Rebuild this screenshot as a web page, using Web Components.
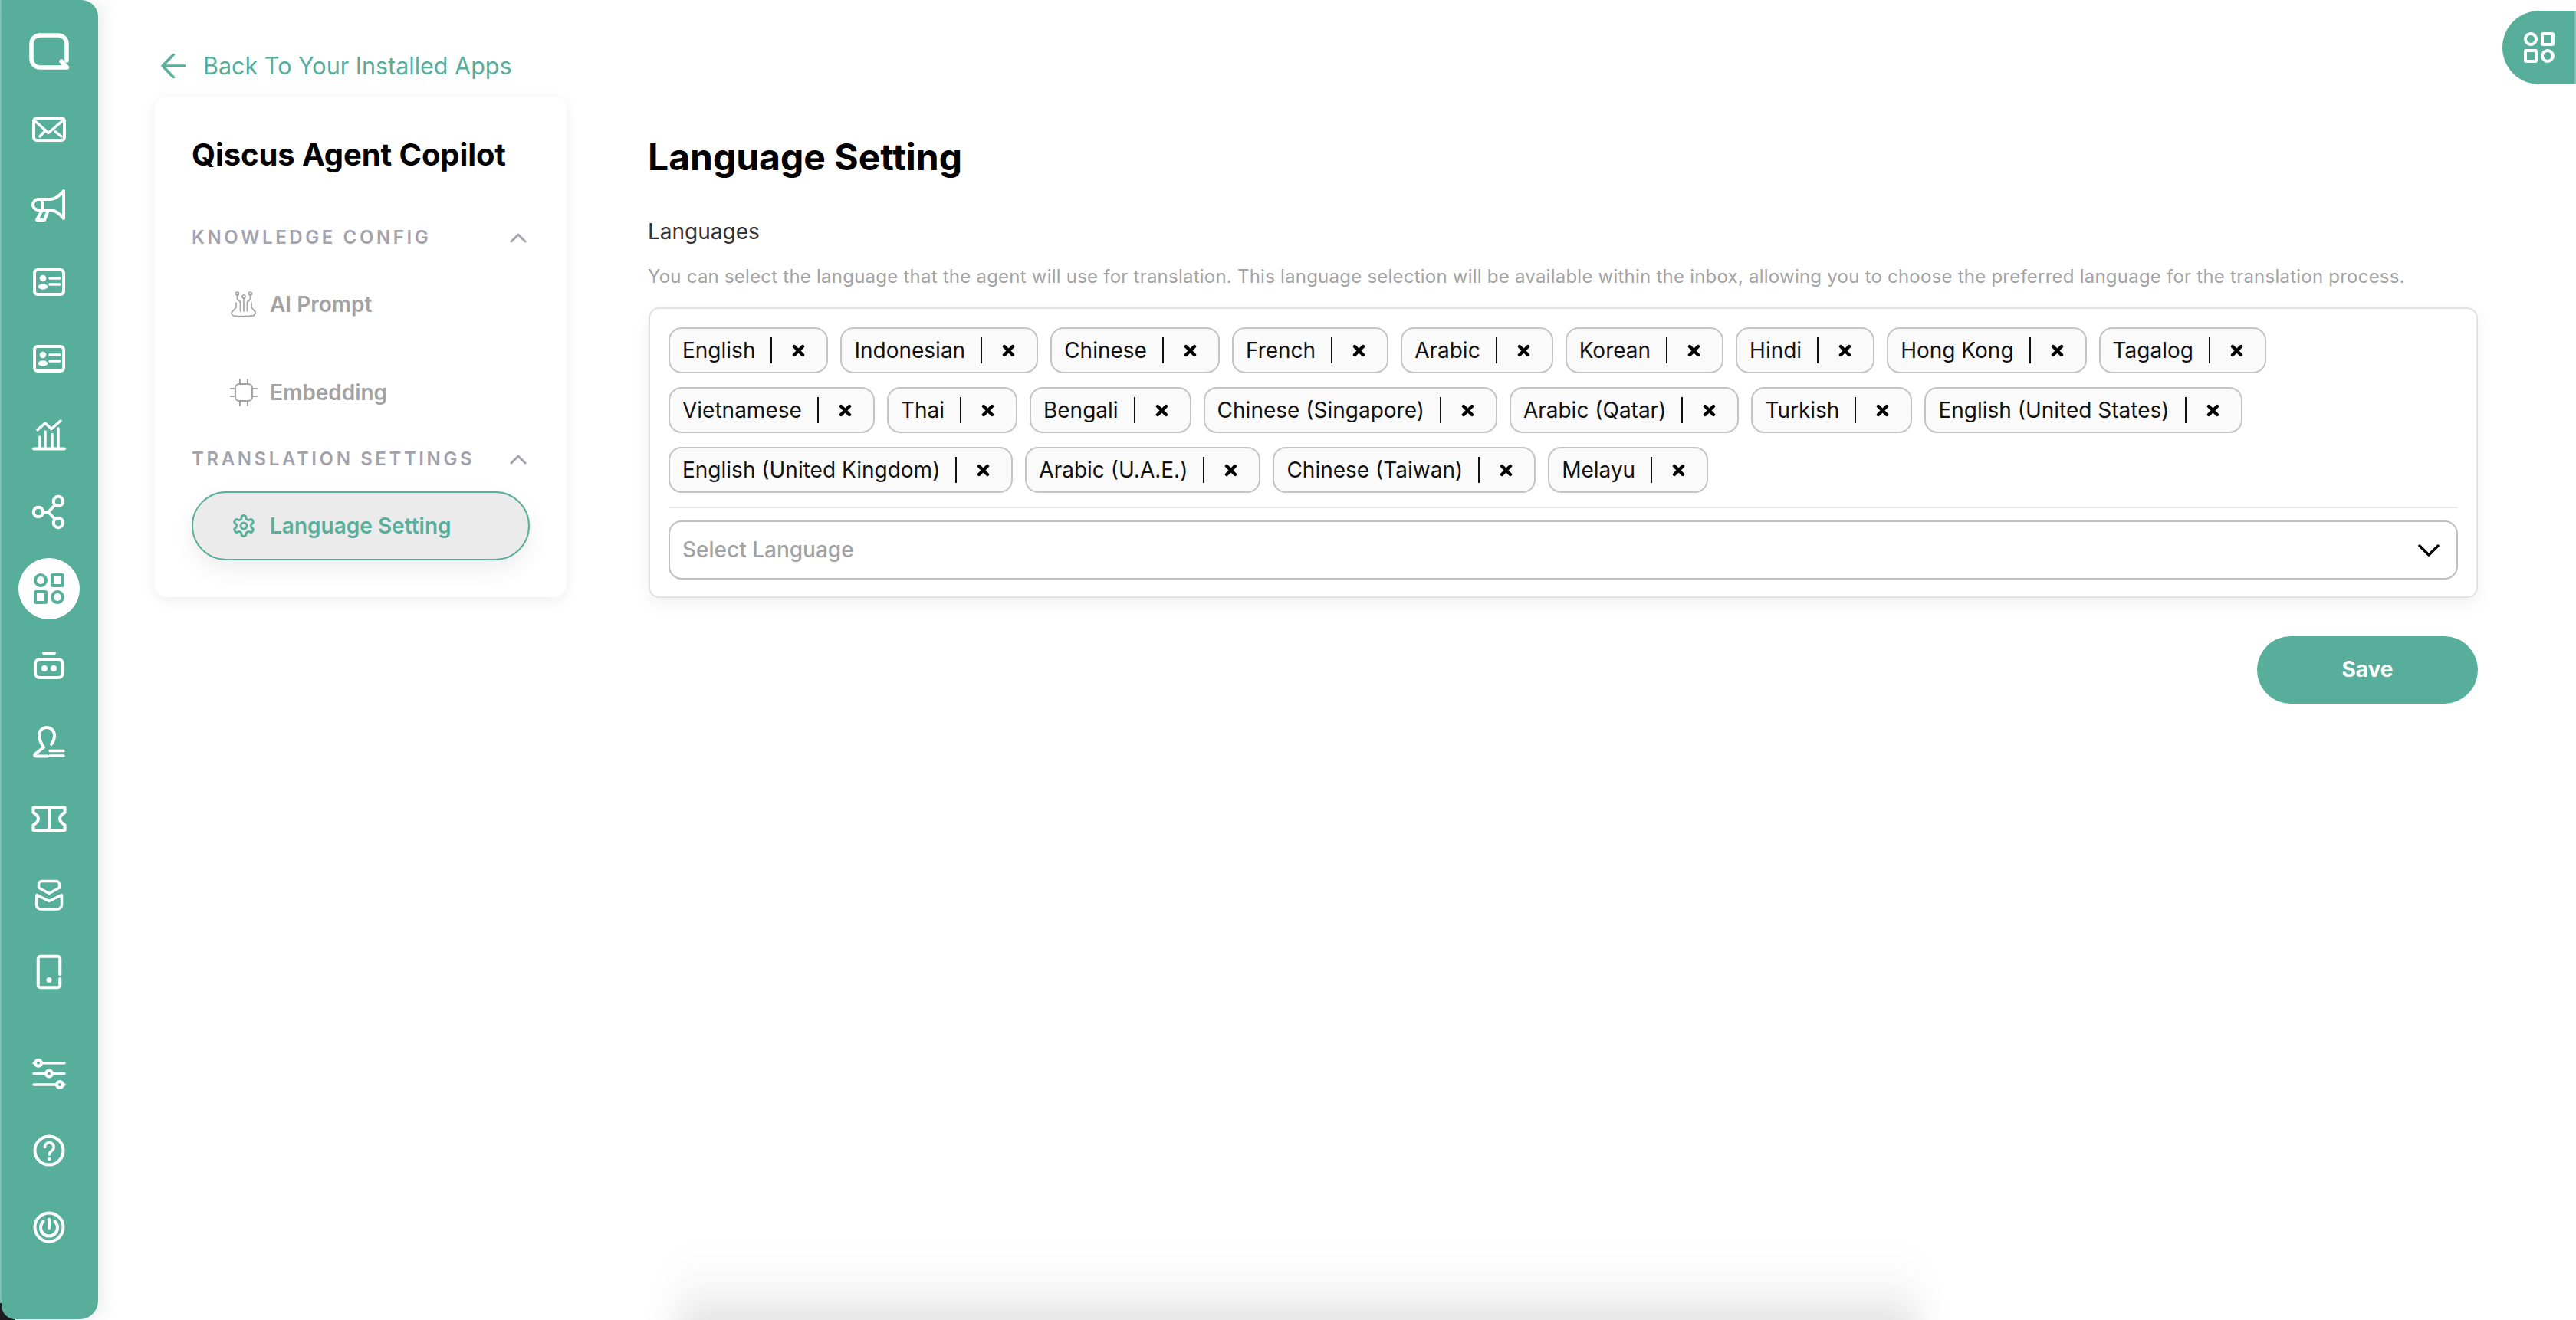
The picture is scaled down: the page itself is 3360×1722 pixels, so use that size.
<!DOCTYPE html>
<html lang="en">
<head>
<meta charset="utf-8">
<title>Language Setting</title>
<style>
  html, body { margin: 0; height: 100%; background: #fff; overflow: hidden; }
  body { font-family: Inter, "Liberation Sans", sans-serif; }
</style>
</head>
<body>
<qc-page>
  <qc-rail slot="rail">
    <qc-rail-icon name="logo"></qc-rail-icon>
    <qc-rail-icon name="mail"></qc-rail-icon>
    <qc-rail-icon name="megaphone"></qc-rail-icon>
    <qc-rail-icon name="card"></qc-rail-icon>
    <qc-rail-icon name="card"></qc-rail-icon>
    <qc-rail-icon name="chart"></qc-rail-icon>
    <qc-rail-icon name="share"></qc-rail-icon>
    <qc-rail-icon name="apps" active></qc-rail-icon>
    <qc-rail-icon name="bot"></qc-rail-icon>
    <qc-rail-icon name="stamp"></qc-rail-icon>
    <qc-rail-icon name="ticket"></qc-rail-icon>
    <qc-rail-icon name="mailopen"></qc-rail-icon>
    <qc-rail-icon name="tablet"></qc-rail-icon>
    <qc-rail-icon name="sliders" slot="bottom"></qc-rail-icon>
    <qc-rail-icon name="help" slot="bottom"></qc-rail-icon>
    <qc-rail-icon name="power" slot="bottom"></qc-rail-icon>
  </qc-rail>

  <qc-back-link slot="back">Back To Your Installed Apps</qc-back-link>

  <qc-side-card slot="side" heading="Qiscus Agent Copilot">
    <qc-nav-section>KNOWLEDGE CONFIG</qc-nav-section>
    <qc-nav-item icon="prompt">AI Prompt</qc-nav-item>
    <qc-nav-item icon="chip">Embedding</qc-nav-item>
    <qc-nav-section>TRANSLATION SETTINGS</qc-nav-section>
    <qc-nav-item icon="gear" active>Language Setting</qc-nav-item>
  </qc-side-card>

  <qc-language-form slot="content">
    <lang-chip>English</lang-chip>
    <lang-chip>Indonesian</lang-chip>
    <lang-chip>Chinese</lang-chip>
    <lang-chip>French</lang-chip>
    <lang-chip>Arabic</lang-chip>
    <lang-chip>Korean</lang-chip>
    <lang-chip>Hindi</lang-chip>
    <lang-chip>Hong Kong</lang-chip>
    <lang-chip>Tagalog</lang-chip>
    <lang-chip>Vietnamese</lang-chip>
    <lang-chip>Thai</lang-chip>
    <lang-chip>Bengali</lang-chip>
    <lang-chip>Chinese (Singapore)</lang-chip>
    <lang-chip>Arabic (Qatar)</lang-chip>
    <lang-chip>Turkish</lang-chip>
    <lang-chip>English (United States)</lang-chip>
    <lang-chip>English (United Kingdom)</lang-chip>
    <lang-chip>Arabic (U.A.E.)</lang-chip>
    <lang-chip>Chinese (Taiwan)</lang-chip>
    <lang-chip>Melayu</lang-chip>
  </qc-language-form>

  <qc-corner-tab slot="overlay"></qc-corner-tab>
</qc-page>

<script>
const TEAL = "#57ae9a";

// 60x60 rail icons, drawn around the centre of each rail slot
const RAIL_ICONS = {
  logo: `<g style="filter:blur(.6px)" stroke-width="5.5"><path d="M18 8H42a11 11 0 0 1 11 11V41"/><path d="M18 8a11 11 0 0 0-11 11V39a11 11 0 0 0 11 11H53.5L46 42"/></g>`,
  mail: `<rect x="10" y="16" width="40" height="29" rx="4"/><path d="M12 20L29 35.5 47 20M18 40L24 33.5M46 40L38 33.5" stroke-width="3.5"/>`,
  megaphone: `<path d="M49 11V47C44 41 38 36 31 36H16a7 7 0 0 1 0-14H31C38 22 44 17 49 11Z"/><path d="M21 22V36M21 36L14 49H24L29 36"/>`,
  card: `<rect x="11" y="14" width="38" height="32" rx="4"/><circle cx="22" cy="25" r="4.3" fill="#fff" stroke="none"/><ellipse cx="22" cy="36" rx="6.3" ry="3.7" fill="#fff" stroke="none"/><path d="M31 25H44M31 33H44" stroke-width="3.5"/>`,
  chart: `<path d="M10 47.5H50"/><path d="M18 47V32M25 47V25M34 47V28.5M42 47V21M15 22.6L25 14L33 21.5L45 11" stroke-width="3.5"/>`,
  share: `<circle cx="42" cy="16" r="6.3"/><circle cx="16" cy="30" r="6.3"/><circle cx="42" cy="44" r="6.3"/><path d="M22.5 30H29L37 21.5M29 30L37 38.5"/>`,
  apps: `<circle cx="19" cy="19" r="7"/><rect x="34" y="12" width="14" height="14" rx="1"/><rect x="12" y="34" width="14" height="14" rx="1"/><circle cx="41" cy="41" r="7"/>`,
  bot: `<path d="M23 14H37"/><rect x="12" y="22" width="36" height="24" rx="6"/><circle cx="24" cy="34" r="4" fill="#fff" stroke="none"/><circle cx="36" cy="34" r="4" fill="#fff" stroke="none"/>`,
  stamp: `<path d="M33 33C35.5 30 37 26.5 37 21A10 10 0 0 0 17 21C17 27 19 31 23 37L12 45.5Q10 48.5 13 48.5H28"/><path d="M31 41.5H49M31 48H49" stroke-width="3.5"/>`,
  ticket: `<path d="M9.5 15.5H50.5V22C47 24 44 27 44 30C44 33 47 36 50.5 38V45H9.5V38C13 36 16 33 16 30C16 27 13 24 9.5 22ZM30 15.5V45"/>`,
  mailopen: `<path d="M20.5 11.5H39.5a4 4 0 0 1 4 4V20L30 27.5 16.5 20V15.5a4 4 0 0 1 4-4Z" stroke-width="3.5"/><path d="M14 29.5L30 37.5 46.5 29.5V42a6 6 0 0 1-6 6H19.5a6 6 0 0 1-6-6Z" stroke-width="3.5"/>`,
  tablet: `<path d="M44.25 33V12.75a3 3 0 0 0-3-3H18.75a3 3 0 0 0-3 3V47.25a3 3 0 0 0 3 3H41.25a3 3 0 0 0 3-3V39"/><circle cx="30" cy="40.5" r="3.5" fill="#fff" stroke="none"/>`,
  sliders: `<path d="M10 15.7H50M10 29.6H50M10 44H50" stroke-width="3.5"/><circle cx="16" cy="15.7" r="4" fill="${TEAL}"/><circle cx="30" cy="29.6" r="4" fill="${TEAL}"/><circle cx="44" cy="44" r="4" fill="${TEAL}"/>`,
  help: `<circle cx="30" cy="30" r="18.5"/><path d="M24.5 25.5a5.8 5.8 0 1 1 9 4.8c-2 1.4-3.2 2.6-3.2 5" stroke-width="3.5"/><circle cx="30.3" cy="41" r="2.2" fill="#fff" stroke="none"/>`,
  power: `<circle cx="30" cy="30" r="18.5"/><path d="M22.5 22.5a11 11 0 1 0 15 0M30 19.5V31"/>`
};

const NAV_ICONS = {
  prompt: `<g fill="none" stroke="currentColor" stroke-width="1.7" stroke-linecap="round" stroke-linejoin="round"><circle cx="9.5" cy="4" r="2"/><circle cx="18" cy="8" r="2"/><circle cx="26.5" cy="4" r="2"/><path d="M18 10V27M13.5 27V15L9.5 11.5V6M22.5 27V15L26.5 11.5V6M8 16V22L4.5 26M28 16V22L31.5 26"/><path d="M4.5 26C1.5 27.5 1.5 31.5 4 32.5C6 34.5 8 32.5 10 33.5C12 34.8 14 32.8 16 33.5C18 34.8 20 32.8 22 33.5C24 34.8 26 32.5 28 33C31.5 34 35 29 31.5 26"/></g>`,
  chip: `<g fill="none" stroke="currentColor" stroke-width="2" stroke-linecap="round"><rect x="7" y="7" width="22" height="22" rx="5"/><path d="M13 1V7M23 1V7M13 29V35M23 29V35M1 13H7M1 23H7M29 13H35M29 23H35"/></g>`,
  gear: `<g transform="translate(1.8 1.8) scale(1.35)" fill="none" stroke="currentColor" stroke-width="2.1" stroke-linejoin="round"><path d="M12.22 2h-.44a2 2 0 0 0-2 2v.18a2 2 0 0 1-1 1.73l-.43.25a2 2 0 0 1-2 0l-.15-.08a2 2 0 0 0-2.73.73l-.22.38a2 2 0 0 0 .73 2.73l.15.1a2 2 0 0 1 1 1.72v.51a2 2 0 0 1-1 1.74l-.15.09a2 2 0 0 0-.73 2.73l.22.38a2 2 0 0 0 2.73.73l.15-.08a2 2 0 0 1 2 0l.43.25a2 2 0 0 1 1 1.73V20a2 2 0 0 0 2 2h.44a2 2 0 0 0 2-2v-.18a2 2 0 0 1 1-1.73l.43-.25a2 2 0 0 1 2 0l.15.08a2 2 0 0 0 2.73-.73l.22-.39a2 2 0 0 0-.73-2.73l-.15-.08a2 2 0 0 1-1-1.74v-.5a2 2 0 0 1 1-1.74l.15-.09a2 2 0 0 0 .73-2.73l-.22-.38a2 2 0 0 0-2.73-.73l-.15.08a2 2 0 0 1-2 0l-.43-.25a2 2 0 0 1-1-1.73V4a2 2 0 0 0-2-2z"/><circle cx="12" cy="12" r="3"/></g>`
};

class QcPage extends HTMLElement {
  constructor() {
    super();
    this.attachShadow({ mode: "open" });
    this.shadowRoot.innerHTML = `
      <style>
        :host { display: grid; grid-template-columns: 128px 1fr; width: 3360px; height: 1722px; position: relative; overflow: hidden; color: #000; }
        main { padding: 66px 0 0 74px; min-width: 0; }
        .row { display: flex; align-items: flex-start; gap: 107px; margin-top: 20px; }
        .glow {
          position: absolute; left: 884px; top: 1625px; width: 1618px; height: 170px;
          background: linear-gradient(to bottom, rgba(0,0,0,0) 0, rgba(0,0,0,.01) 20%, rgba(0,0,0,.035) 38%, rgba(0,0,0,.1) 57%, rgba(0,0,0,.15) 100%);
          filter: blur(22px);
        }
      </style>
      <slot name="rail"></slot>
      <main>
        <slot name="back"></slot>
        <div class="row">
          <slot name="side"></slot>
          <slot name="content"></slot>
        </div>
      </main>
      <div class="glow"></div>
      <slot name="overlay"></slot>
    `;
  }
}

class QcRail extends HTMLElement {
  constructor() {
    super();
    this.attachShadow({ mode: "open" });
    this.shadowRoot.innerHTML = `
      <style>
        :host {
          display: block; height: 1722px; position: relative; z-index: 2;
          background:
            linear-gradient(#83c2b3, #83c2b3) 0 0 / 2px 1700px no-repeat,
            linear-gradient(#1c1c1c, #1c1c1c) 0 100% / 20px 22px no-repeat;
        }
        .rail {
          box-sizing: border-box; height: 1721px; margin-left: 2px; padding-top: 18px;
          background: ${TEAL};
          border-radius: 0 22px 24px 18px;
          box-shadow: 6px 0 22px rgba(40, 60, 60, .1);
        }
        .bottom { margin-top: 33px; }
      </style>
      <div class="rail">
        <slot></slot>
        <div class="bottom"><slot name="bottom"></slot></div>
      </div>
    `;
  }
}

class QcRailIcon extends HTMLElement {
  connectedCallback() {
    const active = this.hasAttribute("active");
    const root = this.shadowRoot || this.attachShadow({ mode: "open" });
    root.innerHTML = `
      <style>
        :host { display: flex; height: 100px; align-items: center; justify-content: center; margin-left: -2px; }
        .dot { width: 80px; height: 80px; border-radius: 50%; display: flex; align-items: center; justify-content: center; background: ${active ? "#fff" : "transparent"}; }
        svg { width: 60px; height: 60px; fill: none; stroke: ${active ? TEAL : "#fff"}; stroke-width: 4; stroke-linecap: round; stroke-linejoin: round; }
      </style>
      <div class="dot"><svg viewBox="0 0 60 60">${RAIL_ICONS[this.getAttribute("name")]}</svg></div>
    `;
  }
}

class QcBackLink extends HTMLElement {
  constructor() {
    super();
    this.attachShadow({ mode: "open" });
    this.shadowRoot.innerHTML = `
      <style>
        :host { display: flex; align-items: center; gap: 23px; height: 40px; margin-left: 8px; color: ${TEAL}; font: 400 30.5px/40px Inter, sans-serif; white-space: nowrap; }
        svg { width: 32px; height: 32px; fill: none; stroke: ${TEAL}; stroke-width: 3.5; stroke-linecap: round; stroke-linejoin: round; }
      </style>
      <svg viewBox="0 0 32 32"><path d="M2 16H31M16.5 1L2 16L16.5 31"/></svg>
      <span><slot></slot></span>
    `;
  }
}

class QcSideCard extends HTMLElement {
  connectedCallback() {
    const root = this.shadowRoot || this.attachShadow({ mode: "open" });
    root.innerHTML = `
      <style>
        :host { display: block; box-sizing: border-box; width: 537px; height: 653px; padding: 52px 48px 48px; border-radius: 16px; background: #fff; box-shadow: 0 4px 18px rgba(0,0,0,.07); }
        h2 { margin: 0 0 69px; font: 700 40px/48px Inter, sans-serif; letter-spacing: -.1px; color: #000; white-space: nowrap; }
      </style>
      <h2>${this.getAttribute("heading")}</h2>
      <slot></slot>
    `;
  }
}

class QcNavSection extends HTMLElement {
  constructor() {
    super();
    this.attachShadow({ mode: "open" });
    this.shadowRoot.innerHTML = `
      <style>
        :host { display: flex; align-items: center; justify-content: space-between; height: 30px; margin-bottom: 27px; padding-right: 4px; color: #a3a3ad; font: 600 24px/30px Inter, sans-serif; letter-spacing: 3.6px; white-space: nowrap; }
        :host(:not(:first-child)) { margin-top: 27px; margin-bottom: 27px; }
        svg { width: 22px; height: 14px; fill: none; stroke: #a3a3ad; stroke-width: 3; stroke-linecap: round; stroke-linejoin: round; }
      </style>
      <span><slot></slot></span>
      <svg viewBox="0 0 22 14"><path d="M2 12L11 3L20 12"/></svg>
    `;
  }
}

class QcNavItem extends HTMLElement {
  connectedCallback() {
    const root = this.shadowRoot || this.attachShadow({ mode: "open" });
    root.innerHTML = `
      <style>
        :host { display: flex; align-items: center; gap: 16px; box-sizing: border-box; height: 90px; padding-left: 50px; color: #a3a3a3; font: 600 28px/34px Inter, sans-serif; white-space: nowrap; }
        :host(:not(:last-child)) { margin-bottom: 25px; }
        :host(:has(+ qc-nav-section)) { margin-bottom: 0; }
        :host([active]) { padding-left: 48px; color: ${TEAL}; background: #ebebeb; border: 2px solid ${TEAL}; border-radius: 45px; box-shadow: 0 12px 30px rgba(0,0,0,.07); }
        svg { width: 36px; height: 36px; flex: none; }
      </style>
      <svg viewBox="0 0 36 36">${NAV_ICONS[this.getAttribute("icon")]}</svg>
      <span><slot></slot></span>
    `;
  }
}

class QcLanguageForm extends HTMLElement {
  constructor() {
    super();
    this.attachShadow({ mode: "open" });
    this.shadowRoot.innerHTML = `
      <style>
        :host { display: block; width: 2386px; padding-top: 50px; }
        h1 { margin: 0 0 51px -1px; font: 700 48px/58px Inter, sans-serif; color: #000; }
        .label { margin-left: -1px; font: 400 28px/34px Inter, sans-serif; color: #333; }
        .hint { margin: 27px 0 25px -1px; font: 400 24px/30px Inter, sans-serif; letter-spacing: .23px; color: #a3a3a3; white-space: nowrap; }
        .box { box-sizing: border-box; height: 379px; padding: 24px; border: 2px solid #e2e2e2; border-radius: 14px; background: #fff; box-shadow: 0 8px 22px rgba(0,0,0,.06); }
        .chips { display: flex; flex-wrap: wrap; gap: 18px 16px; padding-bottom: 18px; border-bottom: 2px solid #e8e8ec; }
        lang-picker { margin-top: 16px; }
        .actions { display: flex; justify-content: flex-end; margin-top: 50px; }
      </style>
      <h1>Language Setting</h1>
      <div class="label">Languages</div>
      <div class="hint">You can select the language that the agent will use for translation. This language selection will be available within the inbox, allowing you to choose the preferred language for the translation process.</div>
      <div class="box">
        <div class="chips"><slot></slot></div>
        <lang-picker></lang-picker>
      </div>
      <div class="actions"><qc-button>Save</qc-button></div>
    `;
  }
}

class LangChip extends HTMLElement {
  constructor() {
    super();
    this.attachShadow({ mode: "open" });
    this.shadowRoot.innerHTML = `
      <style>
        :host { display: flex; align-items: center; box-sizing: border-box; height: 60px; padding-left: 16px; border: 2px solid #c4c4c4; border-radius: 17px; background: #fafafa; color: #111; font: 400 28px/34px Inter, sans-serif; white-space: nowrap; }
        i { width: 2px; height: 34px; margin-left: 20px; background: #111; }
        .x { display: flex; align-items: center; justify-content: center; width: 71px; padding-right: 2px; box-sizing: border-box; }
        svg { width: 17px; height: 17px; fill: none; stroke: #000; stroke-width: 4.4; stroke-linecap: round; }
      </style>
      <span><slot></slot></span>
      <i></i>
      <span class="x"><svg viewBox="0 0 17 17"><path d="M3 3L14 14M14 3L3 14"/></svg></span>
    `;
  }
}

class LangPicker extends HTMLElement {
  constructor() {
    super();
    this.attachShadow({ mode: "open" });
    this.shadowRoot.innerHTML = `
      <style>
        :host { display: flex; align-items: center; justify-content: space-between; box-sizing: border-box; height: 77px; padding: 0 22px 0 16px; border: 2px solid #bfbfbf; border-radius: 17px; color: #a3a3a3; font: 500 28px/34px Inter, sans-serif; }
        span { margin-top: -2px; }
        svg { width: 28px; height: 18px; fill: none; stroke: #000; stroke-width: 3.5; stroke-linecap: round; stroke-linejoin: round; }
      </style>
      <span>Select Language</span>
      <svg viewBox="0 0 28 18"><path d="M2 3L14 15L26 3"/></svg>
    `;
  }
}

class QcButton extends HTMLElement {
  constructor() {
    super();
    this.attachShadow({ mode: "open" });
    this.shadowRoot.innerHTML = `
      <style>
        :host { display: flex; align-items: center; justify-content: center; box-sizing: border-box; width: 288px; height: 88px; padding-bottom: 2px; border-radius: 44px; background: ${TEAL}; color: #fff; font: 700 28px/34px Inter, sans-serif; }
      </style>
      <slot></slot>
    `;
  }
}

class QcCornerTab extends HTMLElement {
  constructor() {
    super();
    this.attachShadow({ mode: "open" });
    this.shadowRoot.innerHTML = `
      <style>
        :host { position: absolute; top: 14px; right: 0; box-sizing: border-box; width: 96px; height: 96px; display: flex; align-items: center; padding-left: 18px; border-right: 2px solid #83c2b3; border-radius: 48px 0 0 48px; background: ${TEAL}; }
        svg { width: 60px; height: 60px; fill: none; stroke: #fff; stroke-width: 4; stroke-linecap: round; stroke-linejoin: round; }
      </style>
      <svg viewBox="0 0 60 60">${RAIL_ICONS.apps}</svg>
    `;
  }
}

customElements.define("qc-page", QcPage);
customElements.define("qc-rail", QcRail);
customElements.define("qc-rail-icon", QcRailIcon);
customElements.define("qc-back-link", QcBackLink);
customElements.define("qc-side-card", QcSideCard);
customElements.define("qc-nav-section", QcNavSection);
customElements.define("qc-nav-item", QcNavItem);
customElements.define("qc-language-form", QcLanguageForm);
customElements.define("lang-chip", LangChip);
customElements.define("lang-picker", LangPicker);
customElements.define("qc-button", QcButton);
customElements.define("qc-corner-tab", QcCornerTab);
</script>
</body>
</html>
